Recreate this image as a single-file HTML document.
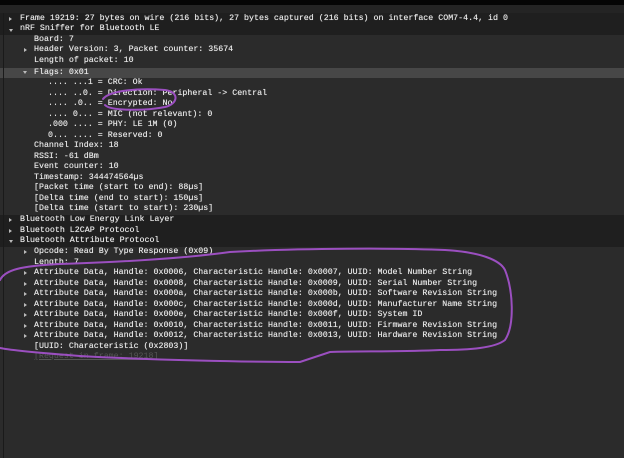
<!DOCTYPE html><html><head><style>
body{margin:0;width:624px;height:458px;background:#2b2b2b;overflow:hidden;position:relative;font-family:"Liberation Mono",monospace;font-size:8.3px;color:#e6e6e6}
.top{position:absolute;left:0;top:0;width:624px;height:5px;background:#050505}
.top2{position:absolute;left:0;top:5px;width:624px;height:8px;background:#242424}
.bg{position:absolute;left:0;width:624px}
.r{position:absolute;height:10.5px;line-height:10.5px;white-space:pre;text-shadow:0 0 0.4px #e6e6e6}
.a{position:absolute;width:0;height:0;border-left:3px solid #bbb;border-top:2.5px solid transparent;border-bottom:2.5px solid transparent}
.d{position:absolute;width:0;height:0;border-top:3px solid #bbb;border-left:2.5px solid transparent;border-right:2.5px solid transparent}
.lb{position:absolute;left:3px;top:13px;width:1px;height:445px;background:#1a1a1a}
</style></head><body>
<div class="top"></div><div class="top2"></div>
<div class="bg" style="top:13px;height:22px;background:#1f1f1f"></div>
<div class="bg" style="top:67.5px;height:10.5px;background:#474747"></div>
<div class="bg" style="top:215px;height:32px;background:#1f1f1f"></div>
<div class="lb"></div>
<div class="a" style="left:9px;top:16.5px"></div><div class="r" style="left:20px;top:13.5px">Frame 19219: 27 bytes on wire (216 bits), 27 bytes captured (216 bits) on interface COM7-4.4, id 0</div>
<div class="d" style="left:8.5px;top:28.5px"></div><div class="r" style="left:20px;top:24px">nRF Sniffer for Bluetooth LE</div>
<div class="r" style="left:34px;top:34.5px">Board: 7</div>
<div class="a" style="left:24px;top:48px"></div><div class="r" style="left:34px;top:45px">Header Version: 3, Packet counter: 35674</div>
<div class="r" style="left:34px;top:56px">Length of packet: 10</div>
<div class="d" style="left:22.5px;top:71px"></div><div class="r" style="left:34px;top:67.5px">Flags: 0x01</div>
<div class="r" style="left:48px;top:78px">.... ...1 = CRC: Ok</div>
<div class="r" style="left:48px;top:88.5px">.... ..0. = Direction: Peripheral -&gt; Central</div>
<div class="r" style="left:48px;top:99px">.... .0.. = Encrypted: No</div>
<div class="r" style="left:48px;top:109.5px">.... 0... = MIC (not relevant): 0</div>
<div class="r" style="left:48px;top:120px">.000 .... = PHY: LE 1M (0)</div>
<div class="r" style="left:48px;top:130.5px">0... .... = Reserved: 0</div>
<div class="r" style="left:34px;top:141px">Channel Index: 18</div>
<div class="r" style="left:34px;top:151.5px">RSSI: -61 dBm</div>
<div class="r" style="left:34px;top:162px">Event counter: 10</div>
<div class="r" style="left:34px;top:172.5px">Timestamp: 344474564µs</div>
<div class="r" style="left:34px;top:183px">[Packet time (start to end): 88µs]</div>
<div class="r" style="left:34px;top:193.5px">[Delta time (end to start): 150µs]</div>
<div class="r" style="left:34px;top:204px">[Delta time (start to start): 230µs]</div>
<div class="a" style="left:9px;top:218px"></div><div class="r" style="left:20px;top:215px">Bluetooth Low Energy Link Layer</div>
<div class="a" style="left:9px;top:228.5px"></div><div class="r" style="left:20px;top:225.5px">Bluetooth L2CAP Protocol</div>
<div class="d" style="left:8.5px;top:240px"></div><div class="r" style="left:20px;top:236px">Bluetooth Attribute Protocol</div>
<div class="a" style="left:24px;top:250px"></div><div class="r" style="left:34px;top:247px">Opcode: Read By Type Response (0x09)</div>
<div class="r" style="left:34px;top:257.5px">Length: 7</div>
<div class="a" style="left:24px;top:271px"></div><div class="r" style="left:34px;top:268px">Attribute Data, Handle: 0x0006, Characteristic Handle: 0x0007, UUID: Model Number String</div>
<div class="a" style="left:24px;top:281.5px"></div><div class="r" style="left:34px;top:278.5px">Attribute Data, Handle: 0x0008, Characteristic Handle: 0x0009, UUID: Serial Number String</div>
<div class="a" style="left:24px;top:292px"></div><div class="r" style="left:34px;top:289px">Attribute Data, Handle: 0x000a, Characteristic Handle: 0x000b, UUID: Software Revision String</div>
<div class="a" style="left:24px;top:302.5px"></div><div class="r" style="left:34px;top:299.5px">Attribute Data, Handle: 0x000c, Characteristic Handle: 0x000d, UUID: Manufacturer Name String</div>
<div class="a" style="left:24px;top:313px"></div><div class="r" style="left:34px;top:310px">Attribute Data, Handle: 0x000e, Characteristic Handle: 0x000f, UUID: System ID</div>
<div class="a" style="left:24px;top:323.5px"></div><div class="r" style="left:34px;top:320.5px">Attribute Data, Handle: 0x0010, Characteristic Handle: 0x0011, UUID: Firmware Revision String</div>
<div class="a" style="left:24px;top:334px"></div><div class="r" style="left:34px;top:331px">Attribute Data, Handle: 0x0012, Characteristic Handle: 0x0013, UUID: Hardware Revision String</div>
<div class="r" style="left:34px;top:341.5px">[UUID: Characteristic (0x2803)]</div>
<div class="r" style="left:34px;top:352px;color:#555;text-shadow:none;text-decoration:underline">[Request in frame: 19218]</div>
<svg width="624" height="458" style="position:absolute;left:0;top:0" fill="none" stroke="#9b4fc0" stroke-width="2" stroke-linecap="round">
<path d="M103 99 C110 90 140 88 165 90 C180 92 178 104 165 107 C145 111 110 111 105 105"/>
<path d="M0 280 C5 270 20 266 60 264 C120 262 180 259 230 252 C300 248 400 248 445 250 C480 252 500 260 505 270 C513 290 515 325 505 340 C495 348 470 350 440 350 C400 352 360 351 330 352 L300 362 C250 362 150 360 80 356 C40 353 10 350 0 348"/>
</svg>
</body></html>
